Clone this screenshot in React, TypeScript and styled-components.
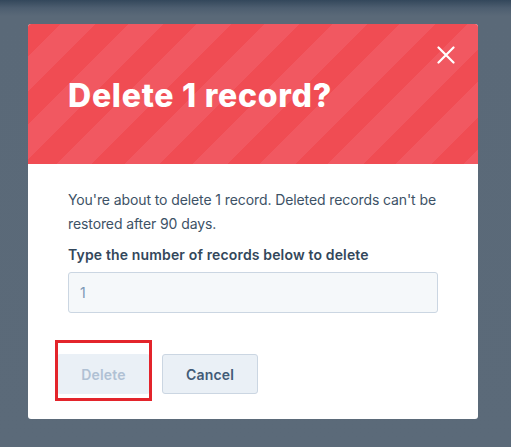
import React from "react";
import styled, { createGlobalStyle } from "styled-components";

const Global = createGlobalStyle`
  html, body { margin: 0; padding: 0; }
  body {
    width: 511px;
    height: 447px;
    overflow: hidden;
    background: linear-gradient(180deg, #33475b 0px, #4d5e70 8px, #5a6978 16px, #5b6a79 100%);
    font-family: Inter, "Noto Sans", sans-serif;
  }
`;

const Page = styled.div`
  padding: 24px 0 0 28px;
`;

const Modal = styled.div`
  width: 450px;
  background: #ffffff;
  border-radius: 3px;
  overflow: hidden;
`;

const Header = styled.div`
  position: relative;
  height: 140px;
  box-sizing: border-box;
  padding: 50px 40px 0 40px;
  background: repeating-linear-gradient(
    135deg,
    #f04c53 0px,
    #f04c53 23px,
    #f15861 23px,
    #f15861 48px
  );
`;

const Title = styled.h1`
  margin: 0;
  color: #ffffff;
  font-size: 32px;
  line-height: 44px;
  font-weight: 800;
  letter-spacing: 0.75px;
`;

const CloseButton = styled.button`
  position: absolute;
  top: 19px;
  right: 20px;
  width: 24px;
  height: 24px;
  padding: 0;
  border: none;
  background: transparent;
  display: flex;
  align-items: center;
  justify-content: center;
  cursor: pointer;
`;

const Body = styled.div`
  padding: 24px 40px 0 40px;
`;

const Text = styled.p`
  margin: 0;
  color: #3d5266;
  font-size: 14px;
  line-height: 24px;
  letter-spacing: -0.1px;
`;

const Label = styled.label`
  display: block;
  margin-top: 7px;
  color: #33475b;
  font-size: 14px;
  line-height: 24px;
  font-weight: 600;
  letter-spacing: 0.15px;
`;

const Input = styled.div`
  margin-top: 5px;
  height: 41px;
  box-sizing: border-box;
  border: 1px solid #cbd6e2;
  border-radius: 3px;
  background: #f5f8fa;
  padding: 0 11px;
  display: flex;
  align-items: center;
  color: #7c98b6;
  font-size: 14px;
`;

const Footer = styled.div`
  display: flex;
  gap: 12px;
  padding: 41px 29px 25px 29px;
`;

const ButtonWrap = styled.div`
  position: relative;
`;

const Highlight = styled.div`
  position: absolute;
  left: -2px;
  top: -14px;
  width: 97px;
  height: 61px;
  box-sizing: border-box;
  border: 3px solid #e3242b;
  pointer-events: none;
`;

const Button = styled.button<{ $disabled?: boolean }>`
  height: 40px;
  box-sizing: border-box;
  padding: 0;
  width: ${(p) => (p.$disabled ? "93px" : "96px")};
  border-radius: 3px;
  border: 1px solid ${(p) => (p.$disabled ? "#eaf0f6" : "#cbd6e2")};
  background: #eaf0f6;
  color: ${(p) => (p.$disabled ? "#b0c1d4" : "#425b76")};
  font-family: Inter, "Noto Sans", sans-serif;
  font-size: 14px;
  font-weight: 600;
  letter-spacing: 0.2px;
  cursor: pointer;
`;

export default function App() {
  return (
    <>
      <Global />
      <Page>
        <Modal>
          <Header>
            <Title>Delete 1 record?</Title>
            <CloseButton aria-label="Close">
              <svg width="18" height="18" viewBox="0 0 18 18">
                <path d="M1.5 1.5 L16.5 16.5 M16.5 1.5 L1.5 16.5" stroke="#ffffff" strokeWidth="2.2" strokeLinecap="round" />
              </svg>
            </CloseButton>
          </Header>
          <Body>
            <Text>You're about to delete 1 record. Deleted records can't be restored after 90 days.</Text>
            <Label>Type the number of records below to delete</Label>
            <Input>1</Input>
          </Body>
          <Footer>
            <ButtonWrap>
              <Button $disabled>Delete</Button>
              <Highlight />
            </ButtonWrap>
            <Button>Cancel</Button>
          </Footer>
        </Modal>
      </Page>
    </>
  );
}
